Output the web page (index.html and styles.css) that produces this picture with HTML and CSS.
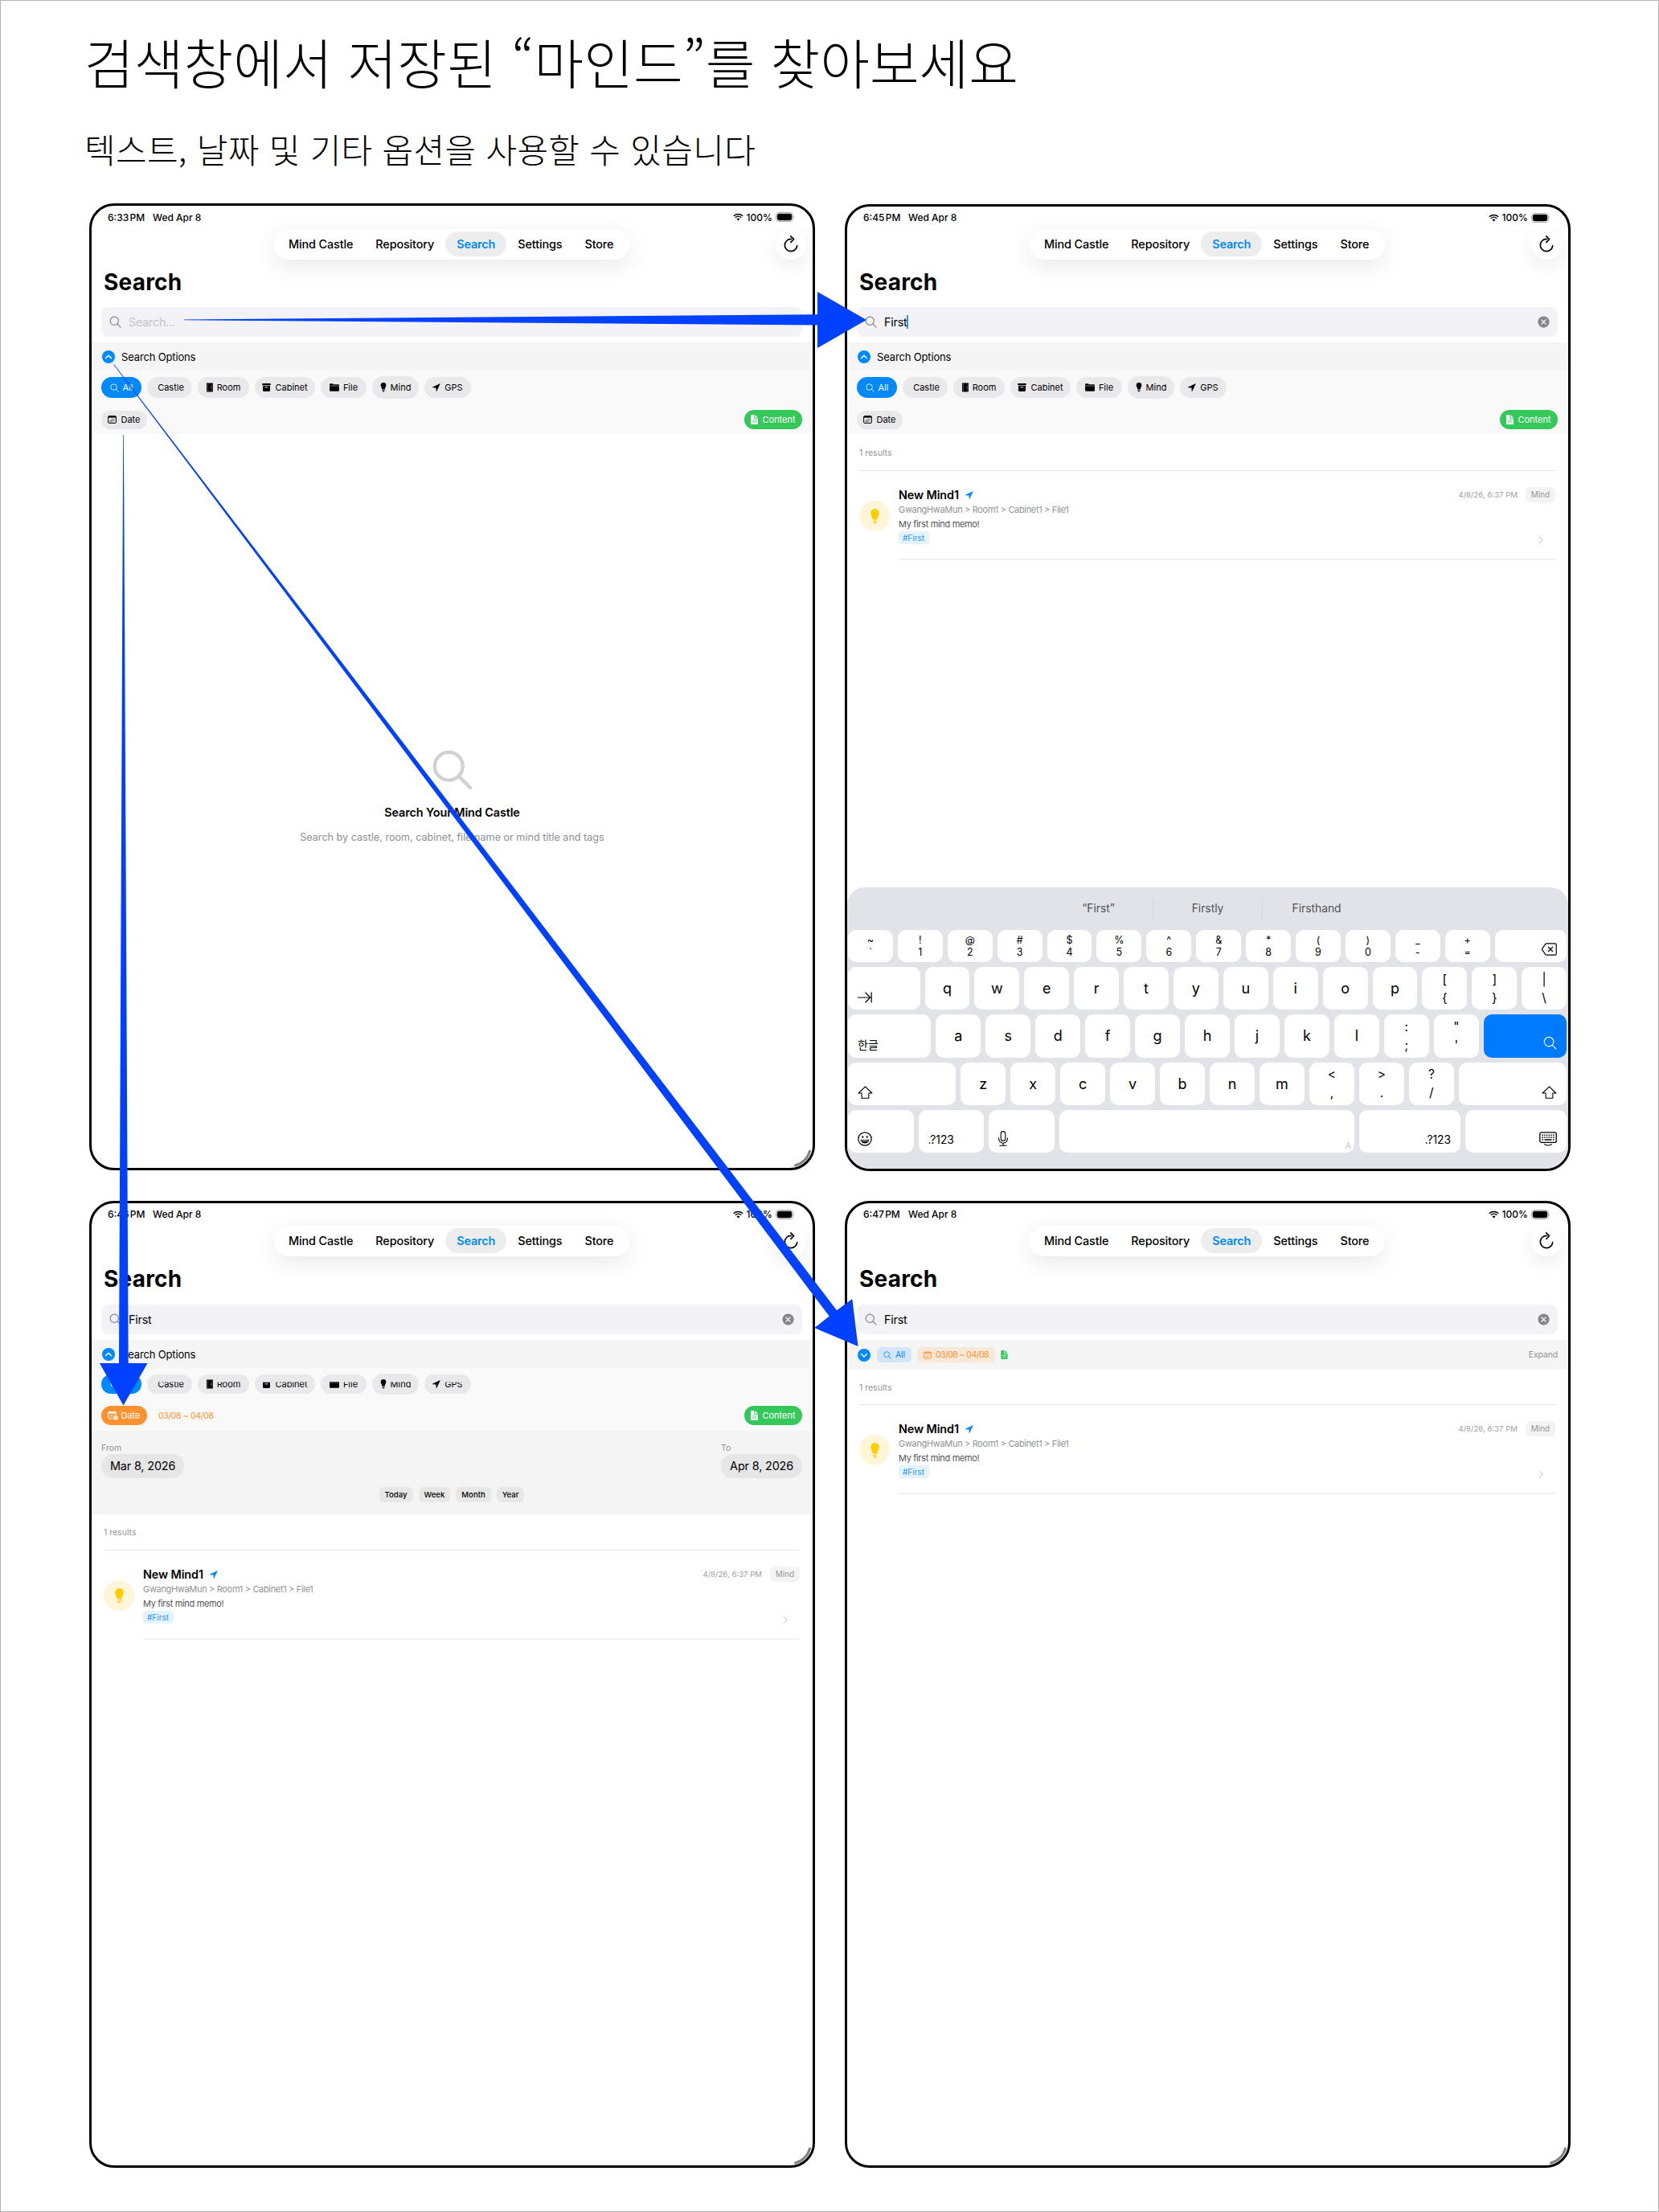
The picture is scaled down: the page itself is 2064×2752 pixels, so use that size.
FILE: index.html
```html
<!DOCTYPE html>
<html lang="ko">
  <head>
    <meta charset="UTF-8">
    <meta name="viewport" content="width=device-width, initial-scale=1">
    <title>Mind Castle - Search</title>
    <link rel="stylesheet" href="styles.css">
  </head>
  <body>
    <!-- icons -->
    <svg class="sprite" width="0" height="0">
      <symbol id="i-search" viewBox="0 0 24 24"><circle cx="10" cy="10" r="8.2" fill="none" stroke="currentColor" stroke-width="var(--sw, 1.9)"/><path d="M16 16l6.6 6.6" stroke="currentColor" stroke-width="var(--sw, 1.9)" stroke-linecap="round"/></symbol>
      <symbol id="i-clear" viewBox="0 0 16 16"><circle cx="8" cy="8" r="7.6" fill="#85858a"/><path d="M5.3 5.3l5.4 5.4M10.7 5.3l-5.4 5.4" stroke="#f2f2f7" stroke-width="1.4" stroke-linecap="round"/></symbol>
      <symbol id="i-up" viewBox="0 0 16 16"><circle cx="8" cy="8" r="8" fill="#0088ff"/><path d="M4.5 9.6L8 6.2l3.5 3.4" fill="none" stroke="#fff" stroke-width="1.4" stroke-linecap="round" stroke-linejoin="round"/></symbol>
      <symbol id="i-down" viewBox="0 0 16 16"><circle cx="8" cy="8" r="8" fill="#0088ff"/><path d="M4.5 6.6L8 10l3.5-3.4" fill="none" stroke="#fff" stroke-width="1.4" stroke-linecap="round" stroke-linejoin="round"/></symbol>
      <symbol id="i-door" viewBox="0 0 8 12"><path d="M0 0.500h8v11H0z" fill="#000"/><path d="M1.400 1.500v9.500M6.900 1.500v9.500" stroke="#aaa" stroke-width=".5"/><circle cx="5.500" cy="6" r=".6" fill="#ddd"/></symbol>
      <symbol id="i-cabinet" viewBox="0 0 11 10"><path d="M0.300 0h10.400v2.300H0.300z"/><path d="M1 3h9v5.500a1.500 1.500 0 0 1-1.500 1.500h-6A1.500 1.500 0 0 1 1 8.500z"/><path d="M3.700 4.800h3.600" stroke="#e9e9eb" stroke-width="1"/></symbol>
      <symbol id="i-folder" viewBox="0 0 12 10"><path d="M0 1.500A1.300 1.300 0 0 1 1.300 .2h2.500l1 1h5.900A1.300 1.300 0 0 1 12 2.500v6A1.300 1.300 0 0 1 10.700 9.800H1.300A1.300 1.300 0 0 1 0 8.500z"/><path d="M0 3h12" stroke="#e9e9eb" stroke-width=".5"/></symbol>
      <symbol id="i-bulb" viewBox="0 0 11 19"><path d="M5.500 0A5.300 5.300 0 0 0 .2 5.300c0 2.700 1.900 3.900 2.300 7.300.1.700.4 1 1 1h4c.6 0 .9-.3 1-1 .4-3.400 2.300-4.600 2.300-7.300A5.300 5.300 0 0 0 5.500 0z" fill="currentColor"/><path d="M3 15h5M3.200 16.600h4.600M4.200 18h2.600" stroke="currentColor" stroke-width="1"/></symbol>
      <symbol id="i-loc" viewBox="0 0 10 10"><path d="M9.900.1L.2 4.600c-.3.200-.2.700.2.700l4.100.2.100 4.100c0 .4.500.5.700.2z" fill="currentColor"/></symbol>
      <symbol id="i-cal" viewBox="0 0 11 10"><rect x=".6" y=".6" width="9.800" height="8.800" rx="1.400" fill="none" stroke="currentColor" stroke-width="1"/><path d="M.6 1.800h9.800" stroke="currentColor" stroke-width="1.600"/><path d="M4.500 4.700h4M2.500 6.300h6M2.500 7.700h4" stroke="currentColor" stroke-width=".8" stroke-dasharray="1 .6"/></symbol>
      <symbol id="i-calcheck" viewBox="0 0 13 11"><rect x=".6" y=".6" width="9.800" height="8.200" rx="1.200" fill="none" stroke="#fff" stroke-width="1"/><path d="M.6 1.800h9.800" stroke="#fff" stroke-width="1.500"/><path d="M2.500 4.500h6M2.500 6.300h4" stroke="#fff" stroke-width=".8" stroke-dasharray="1 .6"/><circle cx="10" cy="7.900" r="3.100" fill="#fff" stroke="#ff9230" stroke-width=".7"/><path d="M8.800 8l.9.900 1.500-1.900" fill="none" stroke="#ff9230" stroke-width=".7"/></symbol>
      <symbol id="i-doc" viewBox="0 0 9 12"><path d="M1.200 0H4.300v3.700a1 1 0 0 0 1 1H9v6.100A1.200 1.200 0 0 1 7.800 12H1.200A1.200 1.200 0 0 1 0 10.800V1.200A1.200 1.200 0 0 1 1.200 0z" fill="currentColor"/><path d="M5.300.1L8.900 3.800H5.300z" fill="currentColor"/><path d="M2 6.800h5M2 9h5" stroke="var(--line, #34c759)" stroke-width=".8"/></symbol>
      <symbol id="i-refresh" viewBox="0 0 18 21"><path d="M9.600 4.300H9a7.700 7.700 0 1 0 7.700 8.200" fill="none" stroke="#000" stroke-width="1.700" stroke-linecap="round"/><path d="M8.700.900L12.600 4.500 8.900 8.300" fill="none" stroke="#000" stroke-width="1.700" stroke-linecap="round" stroke-linejoin="round"/></symbol>
      <symbol id="i-wifi" viewBox="0 0 13 10"><path d="M.8 3.700a8.300 8.300 0 0 1 11.400 0M2.800 5.800a5.400 5.400 0 0 1 7.400 0" fill="none" stroke="#000" stroke-width="1.500"/><path d="M6.500 9.500L4.500 7.500a2.900 2.900 0 0 1 4 0z"/></symbol>
      <symbol id="i-batt" viewBox="0 0 24 12"><rect x=".5" y=".5" width="21" height="11" rx="3.400" fill="none" stroke="#aaa"/><rect x="1.800" y="1.800" width="18.400" height="8.400" rx="2.400"/><path d="M22.600 4.300c1 .4 1 3 0 3.400z" fill="#aaa"/></symbol>
      <symbol id="i-next" viewBox="0 0 6 10"><path d="M.8.800L5 5 .8 9.200" fill="none" stroke="#c4c4c7" stroke-width="1"/></symbol>
      <symbol id="i-del" viewBox="0 0 19 16"><path d="M6.300.800h10.200a1.700 1.700 0 0 1 1.700 1.700v11a1.700 1.700 0 0 1-1.700 1.700H6.300a2 2 0 0 1-1.400-.6L.8 9a1.400 1.400 0 0 1 0-2L4.900 1.400A2 2 0 0 1 6.300.800zM8 5l6 6M14 5l-6 6" fill="none" stroke="#000" stroke-width="1.200"/></symbol>
      <symbol id="i-tab" viewBox="0 0 18 14"><path d="M0 7h15.500M9.500.800L15.800 7l-6.300 6.200M17.200.500v13" fill="none" stroke="#000" stroke-width="1.200"/></symbol>
      <symbol id="i-shift" viewBox="0 0 19 16"><path d="M9.500.800l8.400 8.200h-4v6.200h-8.800V9h-4z" fill="none" stroke="#000" stroke-width="1.100" stroke-linejoin="round"/></symbol>
      <symbol id="i-smile" viewBox="0 0 18 18"><circle cx="9" cy="9" r="8.200" fill="none" stroke="#000" stroke-width="1.200"/><ellipse cx="6.300" cy="6.500" rx="1" ry="1.300"/><ellipse cx="11.700" cy="6.500" rx="1" ry="1.300"/><path d="M3.500 9.600c3.300 1 7.700 1 11 0-.3 3-2.500 5-5.500 5s-5.200-2-5.500-5z"/><path d="M4.600 11c3 .7 5.800.7 8.800 0" stroke="#fff" stroke-width=".8" fill="none"/></symbol>
      <symbol id="i-mic" viewBox="0 0 12 19"><rect x="3.200" y=".6" width="5.600" height="11.600" rx="2.800" fill="none" stroke="#000" stroke-width="1.100"/><path d="M.6 8.500v1.300a5.400 5.400 0 0 0 10.800 0V8.500M6 15.200v3M1.500 18.300h9" fill="none" stroke="#000" stroke-width="1.100"/></symbol>
      <symbol id="i-kbd" viewBox="0 0 22 18"><rect x=".8" y=".8" width="20.400" height="12.600" rx="2" fill="none" stroke="#000" stroke-width="1.300"/><path d="M3.500 4.200h15M3.500 7h15" stroke="#000" stroke-width="1.500" stroke-dasharray="1.500 1.200"/><path d="M3.500 10h1.500M6.500 10h9M17 10h1.500" stroke="#000" stroke-width="1.500"/><path d="M6 15.500l5 1.700 5-1.700" fill="none" stroke="#000" stroke-width="1.200"/></symbol>
    </svg>

    <div class="page">
      <header class="intro">
        <h1>검색창에서 저장된 “마인드”를 찾아보세요</h1>
        <p>텍스트, 날짜 및 기타 옵션을 사용할 수 있습니다</p>
      </header>

      <main class="screens">
        <!-- empty search -->
        <section class="device">
          <div class="status"><span class="time">6:33 PM</span><span class="day">Wed Apr 8</span><svg class="wifi"><use href="#i-wifi"/></svg><span class="pct">100%</span><svg class="batt"><use href="#i-batt"/></svg></div>
          <div class="topbar">
            <nav class="tabs"><a>Mind Castle</a><a>Repository</a><a class="active">Search</a><a>Settings</a><a>Store</a></nav>
            <button class="refresh"><svg><use href="#i-refresh"/></svg></button>
          </div>
          <h2>Search</h2>
          <div class="field"><svg><use href="#i-search"/></svg><span class="hint">Search...</span></div>
          <div class="options"><svg><use href="#i-up"/></svg><span>Search Options</span></div>
          <div class="filters">
            <div class="chips">
              <span class="chip all"><svg><use href="#i-search"/></svg><b>All</b></span>
              <span class="chip castle"><b>Castle</b></span>
              <span class="chip room"><svg><use href="#i-door"/></svg><b>Room</b></span>
              <span class="chip cabinet"><svg><use href="#i-cabinet"/></svg><b>Cabinet</b></span>
              <span class="chip file"><svg><use href="#i-folder"/></svg><b>File</b></span>
              <span class="chip mind"><svg><use href="#i-bulb"/></svg><b>Mind</b></span>
              <span class="chip gps"><svg><use href="#i-loc"/></svg><b>GPS</b></span>
            </div>
            <div class="toggles">
              <span class="chip date"><svg><use href="#i-cal"/></svg><b>Date</b></span>
              <span class="chip content"><svg><use href="#i-doc"/></svg><b>Content</b></span>
            </div>
          </div>
          <div class="empty">
            <svg><use href="#i-search"/></svg>
            <h3>Search Your Mind Castle</h3>
            <p>Search by castle, room, cabinet, file name or mind title and tags</p>
          </div>
          <svg class="grip" viewBox="0 0 24 24"><path d="M20.500 3A25.500 25.500 0 0 1 2.500 21" fill="none" stroke="#808080" stroke-width="3" stroke-linecap="round"/></svg>
        </section>

        <!-- typing -->
        <section class="device second">
          <div class="status"><span class="time">6:45 PM</span><span class="day">Wed Apr 8</span><svg class="wifi"><use href="#i-wifi"/></svg><span class="pct">100%</span><svg class="batt"><use href="#i-batt"/></svg></div>
          <div class="topbar">
            <nav class="tabs"><a>Mind Castle</a><a>Repository</a><a class="active">Search</a><a>Settings</a><a>Store</a></nav>
            <button class="refresh"><svg><use href="#i-refresh"/></svg></button>
          </div>
          <h2>Search</h2>
          <div class="field"><svg><use href="#i-search"/></svg><span class="query caret">First</span><svg class="clear"><use href="#i-clear"/></svg></div>
          <div class="options"><svg><use href="#i-up"/></svg><span>Search Options</span></div>
          <div class="filters">
            <div class="chips">
              <span class="chip all"><svg><use href="#i-search"/></svg><b>All</b></span>
              <span class="chip castle"><b>Castle</b></span>
              <span class="chip room"><svg><use href="#i-door"/></svg><b>Room</b></span>
              <span class="chip cabinet"><svg><use href="#i-cabinet"/></svg><b>Cabinet</b></span>
              <span class="chip file"><svg><use href="#i-folder"/></svg><b>File</b></span>
              <span class="chip mind"><svg><use href="#i-bulb"/></svg><b>Mind</b></span>
              <span class="chip gps"><svg><use href="#i-loc"/></svg><b>GPS</b></span>
            </div>
            <div class="toggles">
              <span class="chip date"><svg><use href="#i-cal"/></svg><b>Date</b></span>
              <span class="chip content"><svg><use href="#i-doc"/></svg><b>Content</b></span>
            </div>
          </div>
          <div class="results">
            <p class="count">1 results</p>
            <article class="item">
              <div class="avatar"><svg><use href="#i-bulb"/></svg></div>
              <div class="body">
                <div class="head"><h3>New Mind1</h3><svg><use href="#i-loc"/></svg><time>4/8/26, 6:37 PM</time><span class="kind">Mind</span></div>
                <p class="path">GwangHwaMun &gt; Room1 &gt; Cabinet1 &gt; File1</p>
                <p class="memo">My first mind memo!</p>
                <div class="foot"><span class="tag">#First</span><svg><use href="#i-next"/></svg></div>
              </div>
            </article>
          </div>
          <div class="keyboard">
            <div class="suggest"><span>“First”</span><span>Firstly</span><span>Firsthand</span></div>
            <div class="keys nums">
              <kbd><i>~</i><i>`</i></kbd><kbd><i>!</i><i>1</i></kbd><kbd><i>@</i><i>2</i></kbd><kbd><i>#</i><i>3</i></kbd><kbd><i>$</i><i>4</i></kbd><kbd><i>%</i><i>5</i></kbd><kbd><i>^</i><i>6</i></kbd><kbd><i>&amp;</i><i>7</i></kbd><kbd><i>*</i><i>8</i></kbd><kbd><i>(</i><i>9</i></kbd><kbd><i>)</i><i>0</i></kbd><kbd><i>_</i><i>-</i></kbd><kbd><i>+</i><i>=</i></kbd>
              <kbd class="fn w90 end"><svg class="del"><use href="#i-del"/></svg></kbd>
            </div>
            <div class="keys">
              <kbd class="fn w90"><svg class="tabkey"><use href="#i-tab"/></svg></kbd>
              <kbd>q</kbd><kbd>w</kbd><kbd>e</kbd><kbd>r</kbd><kbd>t</kbd><kbd>y</kbd><kbd>u</kbd><kbd>i</kbd><kbd>o</kbd><kbd>p</kbd>
              <kbd class="two"><i>[</i><i>{</i></kbd><kbd class="two"><i>]</i><i>}</i></kbd><kbd class="two"><i>|</i><i>\</i></kbd>
            </div>
            <div class="keys">
              <kbd class="fn w103 ko">한글</kbd>
              <kbd>a</kbd><kbd>s</kbd><kbd>d</kbd><kbd>f</kbd><kbd>g</kbd><kbd>h</kbd><kbd>j</kbd><kbd>k</kbd><kbd>l</kbd>
              <kbd class="two"><i>:</i><i>;</i></kbd><kbd class="two"><i>"</i><i>'</i></kbd>
              <kbd class="fn w103 end go"><svg><use href="#i-search"/></svg></kbd>
            </div>
            <div class="keys">
              <kbd class="fn w134"><svg class="shift"><use href="#i-shift"/></svg></kbd>
              <kbd>z</kbd><kbd>x</kbd><kbd>c</kbd><kbd>v</kbd><kbd>b</kbd><kbd>n</kbd><kbd>m</kbd>
              <kbd class="two"><i>&lt;</i><i>,</i></kbd><kbd class="two"><i>&gt;</i><i>.</i></kbd><kbd class="two"><i>?</i><i>/</i></kbd>
              <kbd class="fn w134 end"><svg class="shift"><use href="#i-shift"/></svg></kbd>
            </div>
            <div class="keys">
              <kbd class="fn w81"><svg class="smile"><use href="#i-smile"/></svg></kbd>
              <kbd class="fn w81 alt">.?123</kbd>
              <kbd class="fn w81"><svg class="mic"><use href="#i-mic"/></svg></kbd>
              <kbd class="fn space end">A</kbd>
              <kbd class="fn w126 end alt">.?123</kbd>
              <kbd class="fn w126 end"><svg class="hide"><use href="#i-kbd"/></svg></kbd>
            </div>
          </div>
        </section>

        <!-- date filter open -->
        <section class="device third">
          <div class="status"><span class="time">6:46 PM</span><span class="day">Wed Apr 8</span><svg class="wifi"><use href="#i-wifi"/></svg><span class="pct">100%</span><svg class="batt"><use href="#i-batt"/></svg></div>
          <div class="topbar">
            <nav class="tabs"><a>Mind Castle</a><a>Repository</a><a class="active">Search</a><a>Settings</a><a>Store</a></nav>
            <button class="refresh"><svg><use href="#i-refresh"/></svg></button>
          </div>
          <h2>Search</h2>
          <div class="field"><svg><use href="#i-search"/></svg><span class="query">First</span><svg class="clear"><use href="#i-clear"/></svg></div>
          <div class="options"><svg><use href="#i-up"/></svg><span>Search Options</span></div>
          <div class="filters cut">
            <div class="chips">
              <span class="chip all"><svg><use href="#i-search"/></svg><b>All</b></span>
              <span class="chip castle"><b>Castle</b></span>
              <span class="chip room"><svg><use href="#i-door"/></svg><b>Room</b></span>
              <span class="chip cabinet"><svg><use href="#i-cabinet"/></svg><b>Cabinet</b></span>
              <span class="chip file"><svg><use href="#i-folder"/></svg><b>File</b></span>
              <span class="chip mind"><svg><use href="#i-bulb"/></svg><b>Mind</b></span>
              <span class="chip gps"><svg><use href="#i-loc"/></svg><b>GPS</b></span>
            </div>
            <div class="toggles">
              <span class="chip date on"><svg><use href="#i-calcheck"/></svg><b>Date</b></span>
              <span class="range">03/08 ~ 04/08</span>
              <span class="chip content"><svg><use href="#i-doc"/></svg><b>Content</b></span>
            </div>
          </div>
          <div class="dates">
            <div class="pickers">
              <label>From<span>Mar 8, 2026</span></label>
              <label>To<span>Apr 8, 2026</span></label>
            </div>
            <div class="presets"><span>Today</span><span>Week</span><span>Month</span><span>Year</span></div>
          </div>
          <div class="results">
            <p class="count">1 results</p>
            <article class="item">
              <div class="avatar"><svg><use href="#i-bulb"/></svg></div>
              <div class="body">
                <div class="head"><h3>New Mind1</h3><svg><use href="#i-loc"/></svg><time>4/8/26, 6:37 PM</time><span class="kind">Mind</span></div>
                <p class="path">GwangHwaMun &gt; Room1 &gt; Cabinet1 &gt; File1</p>
                <p class="memo">My first mind memo!</p>
                <div class="foot"><span class="tag">#First</span><svg><use href="#i-next"/></svg></div>
              </div>
            </article>
          </div>
          <svg class="grip" viewBox="0 0 24 24"><path d="M20.500 3A25.500 25.500 0 0 1 2.500 21" fill="none" stroke="#808080" stroke-width="3" stroke-linecap="round"/></svg>
        </section>

        <!-- options collapsed -->
        <section class="device fourth">
          <div class="status"><span class="time">6:47 PM</span><span class="day">Wed Apr 8</span><svg class="wifi"><use href="#i-wifi"/></svg><span class="pct">100%</span><svg class="batt"><use href="#i-batt"/></svg></div>
          <div class="topbar">
            <nav class="tabs"><a>Mind Castle</a><a>Repository</a><a class="active">Search</a><a>Settings</a><a>Store</a></nav>
            <button class="refresh"><svg><use href="#i-refresh"/></svg></button>
          </div>
          <h2>Search</h2>
          <div class="field"><svg><use href="#i-search"/></svg><span class="query">First</span><svg class="clear"><use href="#i-clear"/></svg></div>
          <div class="options folded">
            <svg><use href="#i-down"/></svg>
            <span class="mini blue"><svg><use href="#i-search"/></svg>All</span>
            <span class="mini orange"><svg><use href="#i-cal"/></svg>03/08 ~ 04/08</span>
            <svg class="doc"><use href="#i-doc"/></svg>
            <span class="expand">Expand</span>
          </div>
          <div class="results">
            <p class="count">1 results</p>
            <article class="item">
              <div class="avatar"><svg><use href="#i-bulb"/></svg></div>
              <div class="body">
                <div class="head"><h3>New Mind1</h3><svg><use href="#i-loc"/></svg><time>4/8/26, 6:37 PM</time><span class="kind">Mind</span></div>
                <p class="path">GwangHwaMun &gt; Room1 &gt; Cabinet1 &gt; File1</p>
                <p class="memo">My first mind memo!</p>
                <div class="foot"><span class="tag">#First</span><svg><use href="#i-next"/></svg></div>
              </div>
            </article>
          </div>
          <svg class="grip" viewBox="0 0 24 24"><path d="M20.500 3A25.500 25.500 0 0 1 2.500 21" fill="none" stroke="#808080" stroke-width="3" stroke-linecap="round"/></svg>
        </section>
      </main>

      <svg class="arrows" viewBox="0 0 2064 2752">
        <path d="M229 397.500L1017 391.300V363l61 35-61 35v-28.500L229 398.300z"/>
        <path d="M153.200 541h.7L159.700 1696h23.800l-30 52.500-29.500-52.500h24z"/>
        <path d="M142 453.300L1041 1630.200l19.300-14.200 7.200 59-54.200-23 18.400-14.400L141.400 453.700z"/>
      </svg>
    </div>
  </body>
</html>
```

FILE: styles.css
```css
* {
  box-sizing: border-box;
}

body {
  margin: 0;
  background: #fff;
  color: #000;
  font-family: Inter, "Noto Sans CJK KR", sans-serif;
}

h1, h2, h3, p {
  margin: 0;
}

svg {
  display: block;
  flex: none;
}

.sprite {
  position: absolute;
}

.page {
  position: relative;
  width: 2064px;
  height: 2752px;
  border: 1px solid #b3b3b3;
  overflow: hidden;
}

.intro {
  height: 252px;
  padding: 25px 0 0 104px;
  font-family: "Noto Sans CJK KR", sans-serif;
  font-weight: 300;
  white-space: nowrap;
}

.intro h1 {
  font-size: 67px;
  font-weight: 300;
  line-height: 100px;
  letter-spacing: .1px;
}

.intro p {
  margin-top: 28px;
  font-size: 42px;
  line-height: 62px;
  letter-spacing: .3px;
}

.screens {
  display: grid;
  grid-template-columns: 903px 903px;
  grid-template-rows: 1203px 1203px;
  gap: 38px 37px;
  padding-left: 110px;
}

.device {
  position: relative;
  display: flex;
  flex-direction: column;
  border: 3px solid #000;
  border-radius: 31px;
  overflow: hidden;
}

.device.second {
  margin: 1px 0 -1px;
}

/* status bar */
.status {
  display: flex;
  align-items: center;
  height: 27px;
  padding: 0 22px 0 20px;
  font-size: 12px;
  font-weight: 500;
}

.device:first-child .status {
  height: 28px;
}

.time {
  width: 56px;
  word-spacing: -2px;
}

.wifi {
  width: 13px;
  height: 10px;
  margin: 0 4px 0 auto;
}

.batt {
  width: 24px;
  height: 12px;
  margin-left: 4px;
}

.topbar {
  display: flex;
  justify-content: space-between;
  align-items: center;
  height: 39px;
  padding: 0 8px 0 227px;
}

.tabs {
  display: flex;
  align-items: center;
  width: 442px;
  height: 38px;
  padding: 0 4px;
  border-radius: 19px;
  background: #fff;
  box-shadow: 0 8px 30px rgba(0, 0, 0, .09);
}

.tabs a {
  padding: 0 14px;
  font-size: 14.4px;
  font-weight: 500;
  line-height: 31px;
  letter-spacing: -.12px;
  white-space: nowrap;
}

.tabs .active {
  border-radius: 16px;
  background: #ededed;
  color: #0088ff;
  font-weight: 600;
}

.refresh {
  display: grid;
  place-items: center;
  width: 38px;
  height: 38px;
  border: 0;
  border-radius: 50%;
  background: #fff;
  box-shadow: 0 8px 24px rgba(0, 0, 0, .08);
}

.refresh svg {
  width: 18px;
  height: 21px;
}

h2 {
  height: 59px;
  padding-left: 15px;
  font-size: 28px;
  line-height: 57px;
  letter-spacing: .2px;
}

.field {
  display: flex;
  align-items: center;
  height: 37px;
  margin: 0 13px 7px 12px;
  padding: 0 10px;
  border-radius: 9px;
  background: #f2f2f7;
  font-size: 14.4px;
  letter-spacing: -.25px;
}

.field svg {
  width: 15px;
  height: 15px;
  margin-right: 9px;
  color: #85858a;
}

.field .clear {
  margin: 0 0 0 auto;
}

.hint {
  color: #c5c5c8;
}

.caret {
  border-right: 2px solid #2b97ff;
}

/* options */
.options {
  display: flex;
  align-items: center;
  height: 35px;
  padding: 0 13px;
  background: #f5f5f5;
  font-size: 13px;
  letter-spacing: -.15px;
}

.options > svg {
  width: 16px;
  height: 16px;
  margin-right: 8px;
}

.filters {
  height: 79px;
  padding: 7px 13px 0 12px;
  background: #f9f9f9;
}

.chips {
  display: flex;
  align-items: center;
  gap: 7px;
  height: 28px;
}

.chip {
  display: flex;
  align-items: center;
  justify-content: center;
  gap: 5px;
  height: 26px;
  border-radius: 13px;
  background: #e9e9eb;
  font-size: 11px;
}

.chip b {
  font-weight: 400;
  line-height: 14px;
}

.all { width: 50px; background: #0088ff; color: #fff; }
.castle { width: 56px; padding-left: 3px; }
.room { width: 64px; }
.cabinet { width: 75px; }
.file { width: 57px; }
.mind { width: 58px; height: 28px; border-radius: 14px; }
.gps { width: 58px; }

.all svg { width: 11px; height: 11px; }
.room svg { width: 8px; height: 12px; }
.cabinet svg { width: 11px; height: 10px; }
.file svg { width: 12px; height: 10px; }
.mind svg { width: 8px; height: 12px; }
.gps svg { width: 10px; height: 10px; }

.toggles {
  display: flex;
  align-items: center;
  margin-top: 14px;
  height: 24px;
}

.date {
  width: 57px;
  height: 23px;
}

.date svg { width: 11px; height: 10px; }

.content {
  width: 72px;
  height: 24px;
  margin-left: auto;
  background: #34c759;
  color: #fff;
}

.content svg { width: 9px; height: 12px; }

.date.on {
  gap: 3px;
  background: #ff9230;
  color: #fff;
}

.date.on svg { width: 13px; height: 11px; }

.range {
  margin-left: 14px;
  color: #ff9230;
  font-size: 10.5px;
  letter-spacing: -.35px;
}

/* nothing searched yet */
.empty {
  display: flex;
  flex-direction: column;
  align-items: center;
  padding-top: 392px;
}

.empty svg {
  --sw: 2.05;
  width: 51px;
  height: 51px;
  color: #d1d1d4;
}

.empty h3 {
  margin-top: 18px;
  font-size: 14.4px;
  font-weight: 600;
  line-height: 20px;
  letter-spacing: -.1px;
}

.empty p {
  margin-top: 11px;
  color: #8e8e93;
  font-size: 12.6px;
  line-height: 20px;
}

.grip {
  position: absolute;
  right: 0;
  bottom: 0;
  width: 24px;
  height: 24px;
}

/* result list */
.results {
  padding: 0 16px 0 15px;
}

.count {
  height: 45px;
  color: #929295;
  font-size: 10.5px;
  line-height: 46px;
  border-bottom: 1px solid #e4e4e6;
}

.second .count {
  height: 46px;
  line-height: 48px;
}

.fourth .count {
  height: 44px;
}

.item {
  display: flex;
}

.avatar {
  display: grid;
  place-items: center;
  width: 38px;
  height: 38px;
  margin: 37px 11px 0 0;
  border-radius: 50%;
  background: #fff6d9;
  color: #ffcc00;
}

.avatar svg {
  width: 11px;
  height: 19px;
}

.body {
  flex: 1;
  height: 111px;
  padding-top: 20px;
  border-bottom: 2px solid #f1f1f2;
}

.head {
  display: flex;
  align-items: center;
  height: 19px;
}

.head h3 {
  font-size: 14.4px;
  font-weight: 600;
  letter-spacing: -.1px;
}

.head svg {
  width: 10px;
  height: 10px;
  margin-left: 8px;
  color: #0088ff;
}

.head time {
  margin-left: auto;
  color: #a0a0a4;
  font-size: 9.6px;
}

.kind {
  width: 37px;
  margin-left: 10px;
  border-radius: 6px;
  background: #f3f3f3;
  color: #97979b;
  font-size: 10px;
  line-height: 19px;
  text-align: center;
}

.path, .memo {
  color: #929295;
  font-size: 11px;
  line-height: 18px;
  letter-spacing: -.33px;
}

.memo {
  color: #555;
}

.foot {
  display: flex;
  justify-content: space-between;
  padding-right: 15px;
}

.foot svg {
  width: 6px;
  height: 10px;
  margin-top: 6px;
}

.tag {
  height: 16px;
  padding: 0 6px 0 5px;
  border-radius: 4px;
  background: #e5f3ff;
  color: #1f93fb;
  font-size: 10px;
  line-height: 16px;
}

/* keyboard */
.keyboard {
  margin-top: auto;
  height: 350px;
  padding: 0 2px 0 1px;
  border-radius: 22px 22px 0 0;
  background: #e2e3e8;
}

.suggest {
  display: flex;
  justify-content: center;
  align-items: center;
  height: 53px;
  color: #515155;
  font-size: 13.8px;
}

.suggest span {
  width: 135.5px;
  line-height: 25px;
  text-align: center;
}

.suggest span + span {
  border-left: 1px solid #d5d6db;
}

.keys {
  display: flex;
  gap: 6px;
  height: 53.3px;
  margin-bottom: 6px;
}

.keys.nums {
  height: 40px;
}

kbd {
  flex: 1;
  display: flex;
  flex-direction: column;
  align-items: center;
  justify-content: center;
  border-radius: 10px;
  background: #fff;
  font-family: Inter, sans-serif;
  font-size: 18px;
}

kbd i {
  font-style: normal;
}

.nums kbd {
  font-size: 12.5px;
  line-height: 15px;
}

kbd.two {
  font-size: 15.5px;
  line-height: 23px;
}

kbd.fn {
  flex: none;
  align-items: flex-start;
  justify-content: flex-end;
  padding: 0 12px 8px;
}

kbd.end {
  align-items: flex-end;
}

.w81 { width: 81.5px; }
.w90 { width: 89.5px; }
.w103 { width: 103.3px; }
.w126 { width: 126px; }
.w134 { width: 134.2px; }

kbd.ko {
  padding-bottom: 7px;
  font-family: "Noto Sans CJK KR", sans-serif;
  font-size: 14px;
}

kbd.alt {
  padding-bottom: 8px;
  font-size: 13.8px;
}

kbd.space {
  flex: 1;
  padding: 0 4px 3px;
  color: #c4c4c7;
  font-size: 10px;
}

kbd.go {
  --sw: 1.6;
  padding-bottom: 10px;
  background: #007aff;
  color: #fff;
}

.go svg { width: 17px; height: 17px; }
.del { width: 19px; height: 16px; }
.tabkey { width: 18px; height: 14px; }
.shift { width: 19px; height: 16px; }
.smile { width: 18px; height: 18px; }
.mic { width: 12px; height: 19px; }
.hide { width: 22px; height: 18px; }

/* date range */
.third .field, .fourth .field {
  margin-top: 1px;
}

.third .chips {
  height: 26px;
}

.third .chip {
  height: 24px;
}

.third .mind {
  height: 26px;
}

.cut .chips b {
  clip-path: inset(4.6px 0 0);
}

.cut .file svg, .cut .cabinet svg {
  clip-path: inset(2px 0 0);
}

.cut {
  height: 78px;
}

.dates {
  height: 104px;
  padding: 14px 13px 0 12px;
  background: #f4f4f4;
}

.pickers {
  display: flex;
  justify-content: space-between;
}

.pickers label {
  color: #929295;
  font-size: 10.5px;
  line-height: 15px;
}

.pickers span {
  display: block;
  padding: 0 11px;
  border-radius: 15px;
  background: #e6e6e6;
  color: #000;
  font-size: 14.4px;
  line-height: 30px;
  letter-spacing: -.15px;
}

.presets {
  display: flex;
  justify-content: center;
  gap: 7px;
  margin-top: 11px;
}

.presets span {
  padding: 0 7px;
  border-radius: 6px;
  background: #e7e7e7;
  font-size: 9.6px;
  font-weight: 500;
  line-height: 19px;
}

/* folded options */
.folded {
  height: 37px;
}

.mini {
  display: flex;
  align-items: center;
  gap: 5px;
  height: 19px;
  margin-right: 7px;
  padding: 0 8px;
  border-radius: 6px;
  font-size: 10.5px;
}

.blue {
  background: #d3e6f7;
  color: #0088ff;
}

.orange {
  background: #f9e7d8;
  color: #ff9230;
  letter-spacing: -.55px;
}

.mini svg { width: 10px; height: 10px; }

.options .doc {
  --line: #f5f5f5;
  width: 9px;
  height: 11px;
  color: #34c759;
}

.expand {
  margin-left: auto;
  color: #929295;
  font-size: 10.5px;
}

/* callout arrows */
.arrows {
  position: absolute;
  left: -1px;
  top: -1px;
  width: 2064px;
  height: 2752px;
  fill: #0040ff;
}
```
